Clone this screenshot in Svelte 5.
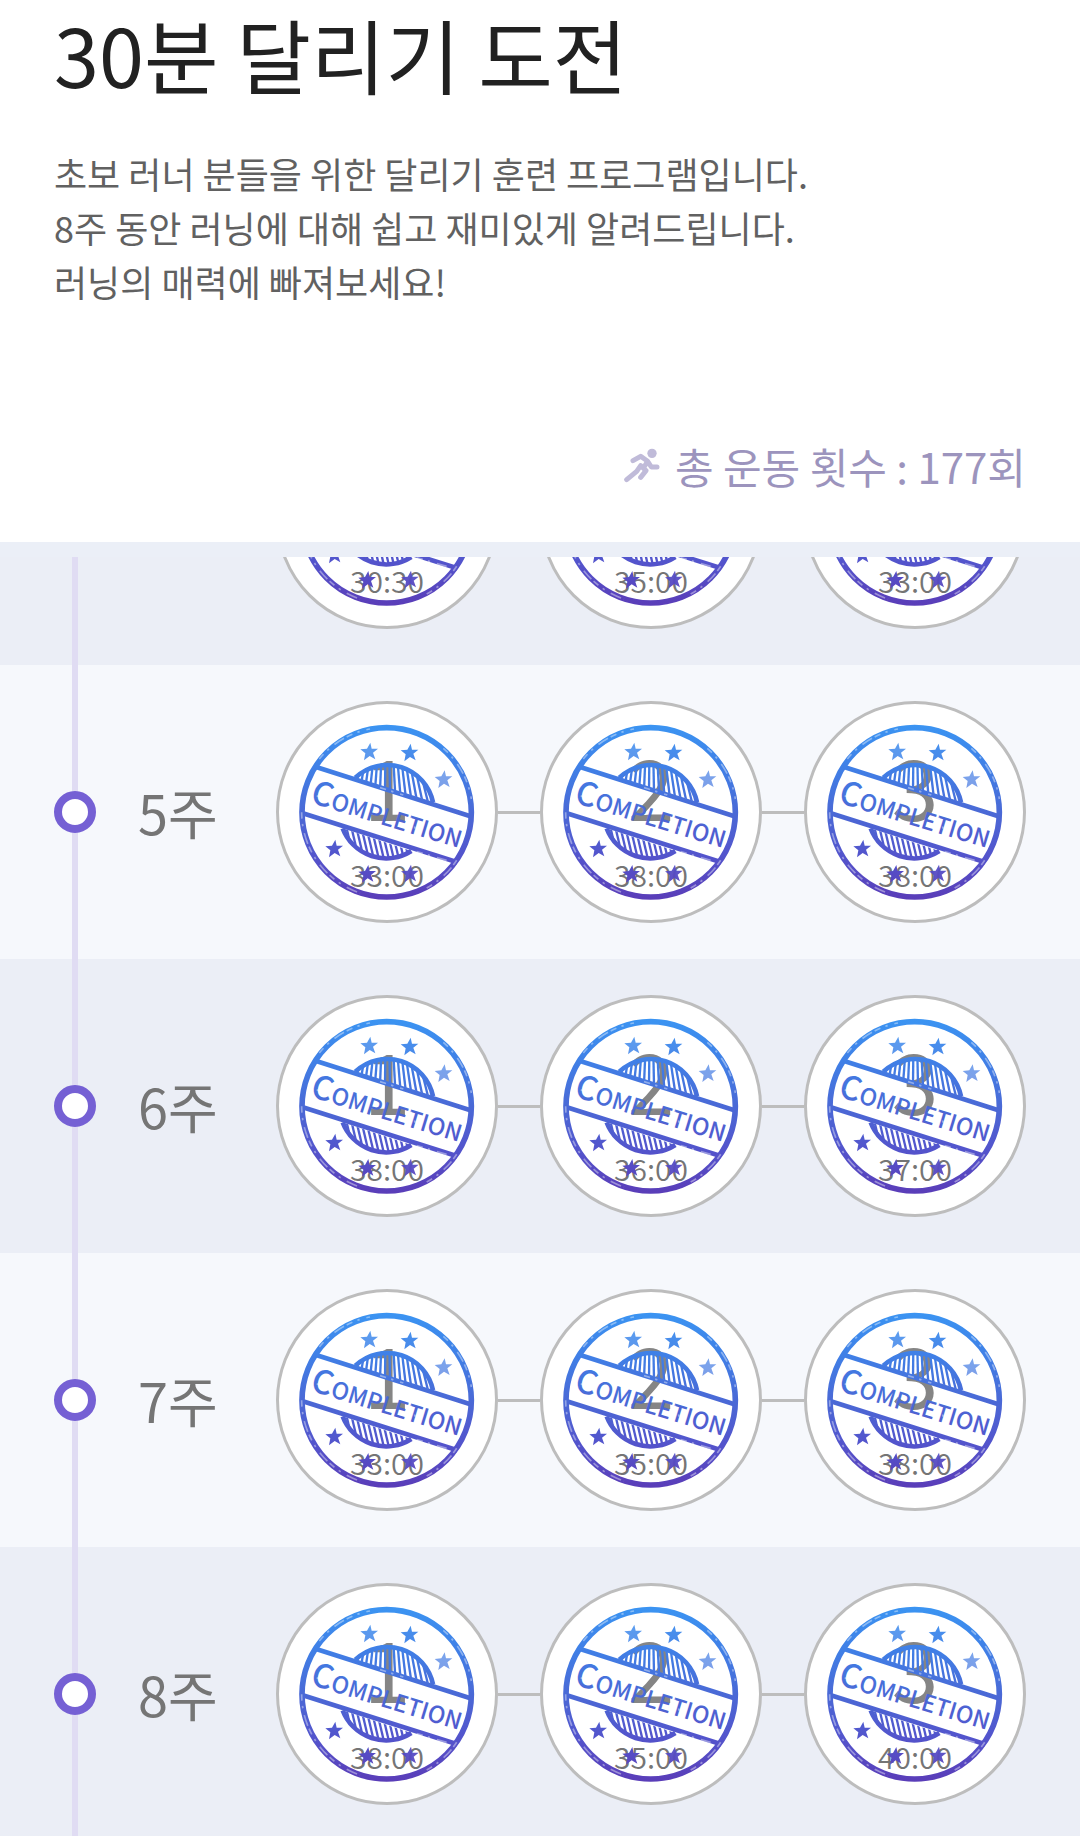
<script>
  const weeks = [
    { label: '4주', times: ['30:30', '35:00', '33:00'] },
    { label: '5주', times: ['33:00', '38:00', '38:00'] },
    { label: '6주', times: ['38:00', '36:00', '37:00'] },
    { label: '7주', times: ['33:00', '35:00', '38:00'] },
    { label: '8주', times: ['38:00', '35:00', '40:00'] }
  ];

  const stars = [
    [297, 168, 0.85],
    [418, 171, 0.95],
    [520, 251, 0.7],
    [192, 459, 1],
    [291, 535, 1],
    [419, 534, 0.95]
  ];

  const hatch = Array.from({ length: 18 }, (_, i) => 225 + i * 15);
</script>

{#snippet stamp()}
  <svg class="stamp" viewBox="18 16 666 666" aria-hidden="true">
    <defs>
      <linearGradient id="ink" gradientUnits="userSpaceOnUse" x1="350" y1="88" x2="350" y2="612">
        <stop offset="0" stop-color="#3b94f2" />
        <stop offset="0.25" stop-color="#407fe6" />
        <stop offset="0.5" stop-color="#4a69d6" />
        <stop offset="0.75" stop-color="#5354cc" />
        <stop offset="1" stop-color="#5a3db8" />
      </linearGradient>
      <linearGradient
        id="word-ink"
        href="#ink"
        gradientTransform="rotate(-17) translate(-118 -320)"
      />
      <clipPath id="upper-dome">
        <path d="M256 246 A140 140 0 0 1 489 320 Z" />
      </clipPath>
      <clipPath id="lower-dome">
        <path d="M218 398 A140 140 0 0 0 424 466 Z" />
      </clipPath>
    </defs>
    <g fill="none" stroke="url(#ink)">
      <circle cx="350" cy="350" r="254" stroke-width="17" />
      <path d="M136 213 L606 363 M96 352 L562 500" stroke-width="14" />
      <path d="M256 246 A140 140 0 0 1 489 320 M218 398 A140 140 0 0 0 424 466" stroke-width="14" />
      <g clip-path="url(#upper-dome)" stroke-width="7">
        {#each hatch as x}
          <path d="M{x + (350 - x) * 0.18} 200 L{x - (350 - x) * 0.1} 330" />
        {/each}
      </g>
      <g clip-path="url(#lower-dome)" stroke-width="7">
        {#each hatch as x}
          <path d="M{x - 12} 390 L{x + 14} 500" />
        {/each}
      </g>
    </g>
    <g fill="url(#ink)">
      {#each stars as [x, y, o]}
        <path
          opacity={o}
          d="M{x + 4} {y - 27} l4 18 19 0 -15 12 7 20 -17 -10 -17 13 4 -21 -15 -12 20 -2 z"
        />
      {/each}
    </g>
    <text class="word" fill="url(#word-ink)" transform="translate(118 320) rotate(17)">
      <tspan class="initial">C</tspan><tspan>OMPLETION</tspan>
    </text>
    <g class="wear" fill="none">
      <path d="M148 190 A256 256 0 0 1 300 100 M520 158 A256 256 0 0 1 604 310" />
      <path d="M95 350 A256 256 0 0 0 270 592 M470 577 A256 256 0 0 0 560 494" />
      <path d="M440 468 L530 494 M330 276 L400 298 M140 300 L190 322 M420 360 L440 410" />
    </g>
  </svg>
{/snippet}

<main>
  <header>
    <h1>30분 달리기 도전</h1>
    <p class="intro">
      초보 러너 분들을 위한 달리기 훈련 프로그램입니다.<br />
      8주 동안 러닝에 대해 쉽고 재미있게 알려드립니다.<br />
      러닝의 매력에 빠져보세요!
    </p>
    <p class="total">
      <svg class="runner" viewBox="0 0 108 108" aria-hidden="true">
        <circle cx="84" cy="16" r="14" />
        <path d="M27 38 L50 25 L71 40 L62 54 M71 40 L82 57 L99 57" />
        <path d="M50 53 L38 70 L8 95 M50 53 L66 68 L50 88" />
      </svg>
      <span>총 운동 횟수 : 177회</span>
    </p>
  </header>

  <section class="schedule">
    <ol>
      {#each weeks as week}
        <li>
          <div class="rail"><span class="dot"></span></div>
          <h2>{week.label}</h2>
          <div class="runs">
            {#each week.times as time, i}
              {#if i > 0}<span class="link"></span>{/if}
              <button type="button">
                <span class="number">{i + 1}</span>
                <span class="time">{time}</span>
                {@render stamp()}
              </button>
            {/each}
          </div>
        </li>
      {/each}
    </ol>
  </section>
</main>

<style>
  :global(body) {
    margin: 0;
    background: #fff;
  }

  main {
    display: flex;
    flex-direction: column;
    height: 100vh;
    overflow: hidden;
    font-family: 'Noto Sans CJK KR', sans-serif;
    font-weight: 400;
  }

  header {
    padding: 0 54px 46px;
  }

  h1 {
    margin: 0;
    font-size: 81px;
    line-height: 106px;
    font-weight: 400;
    color: #212121;
  }

  .intro {
    margin: 40px 0 0;
    font-size: 36px;
    line-height: 54px;
    color: #616161;
  }

  .total {
    display: flex;
    justify-content: flex-end;
    align-items: center;
    gap: 15px;
    margin: 128px 0 0;
    font-size: 42px;
    line-height: 60px;
    color: #9c94bd;
  }

  .runner {
    width: 36px;
    height: 36px;
    fill: none;
    stroke: #c0bbd9;
    stroke-width: 15;
    stroke-linecap: round;
    stroke-linejoin: round;
  }

  .runner circle {
    fill: #c0bbd9;
    stroke: none;
  }

  .schedule {
    flex: 1;
    min-height: 0;
    display: flex;
    flex-direction: column;
    padding-top: 15px;
    background: #ebeff7;
  }

  ol {
    flex: 1;
    min-height: 0;
    display: flex;
    flex-direction: column;
    justify-content: flex-start;
    margin: 0;
    padding: 0;
    list-style: none;
    overflow: hidden;
  }

  li {
    flex: none;
    display: flex;
    align-items: center;
    height: 294px;
    padding: 0 54px;
    background: #f6f8fc;
  }

  li:nth-child(odd) {
    background: #ebeef6;
  }

  li:first-child {
    margin-top: -186px;
  }

  li:first-child h2,
  li:first-child .number,
  li:first-child .word {
    visibility: hidden;
  }

  .rail {
    flex: none;
    display: flex;
    align-items: center;
    justify-content: center;
    align-self: stretch;
    width: 42px;
    background: linear-gradient(#e0dcf3, #e0dcf3) center / 6px 100% no-repeat;
  }

  .dot {
    box-sizing: border-box;
    width: 42px;
    height: 42px;
    border: 8px solid #7560d4;
    border-radius: 50%;
    background: #fff;
  }

  h2 {
    flex: 1;
    margin: 0;
    padding-left: 42px;
    font-size: 54px;
    line-height: 78px;
    font-weight: 400;
    color: #757575;
  }

  .runs {
    flex: none;
    display: flex;
    align-items: center;
  }

  .link {
    width: 42px;
    height: 3px;
    background: #bdbdbd;
  }

  button {
    position: relative;
    box-sizing: border-box;
    display: flex;
    flex-direction: column;
    align-items: center;
    justify-content: flex-start;
    width: 222px;
    height: 222px;
    padding: 22px 0 0;
    border: 3px solid #bdbdbd;
    border-radius: 50%;
    background: #fff;
    font: inherit;
    color: #858585;
  }

  .number {
    font-size: 84px;
    line-height: 118px;
  }

  .time {
    margin-top: 9px;
    font-size: 30px;
    line-height: 42px;
    font-weight: 350;
    color: #757575;
  }

  .stamp {
    position: absolute;
    inset: -3px;
    width: 222px;
    height: 222px;
  }

  .word {
    font-size: 70px;
    font-weight: 500;
  }

  .initial {
    font-size: 98px;
  }

  .wear {
    stroke: #fff;
    stroke-width: 5;
    stroke-dasharray: 19 16 7 21 34 9;
    opacity: 0.4;
  }
</style>
